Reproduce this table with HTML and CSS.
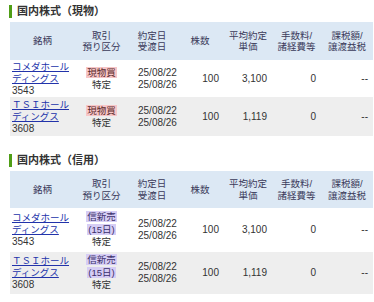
FILE: index.html
```html
<!DOCTYPE html>
<html lang="ja">
<head>
<meta charset="utf-8">
<link rel="stylesheet" href="styles.css">
</head>
<body>
<div class="title first">国内株式（現物）</div>
<table class="tbl">
  <colgroup>
    <col class="c1"><col class="c2"><col class="c3"><col class="c4"><col class="c5"><col class="c6"><col class="c7">
  </colgroup>
  <tr class="head h1">
    <th>銘柄</th><th>取引<br>預り区分</th><th>約定日<br>受渡日</th><th>株数</th><th>平均約定<br>単価</th><th>手数料/<br>諸経費等</th><th>課税額/<br>譲渡益税</th>
  </tr>
  <tr class="row ra">
    <td class="name"><a href="#">コメダホール<br>ディングス</a><br><span class="code">3543</span></td>
    <td class="kind"><span class="buy">現物買</span><br>特定</td>
    <td class="date">25/08/22<br>25/08/26</td>
    <td class="num">100</td><td class="num">3,100</td><td class="num">0</td><td class="num">--</td>
  </tr>
  <tr class="row rb alt">
    <td class="name"><a href="#">ＴＳＩホール<br>ディングス</a><br><span class="code">3608</span></td>
    <td class="kind"><span class="buy">現物買</span><br>特定</td>
    <td class="date">25/08/22<br>25/08/26</td>
    <td class="num">100</td><td class="num">1,119</td><td class="num">0</td><td class="num">--</td>
  </tr>
</table>

<div class="title second">国内株式（信用）</div>
<table class="tbl">
  <colgroup>
    <col class="c1"><col class="c2"><col class="c3"><col class="c4"><col class="c5"><col class="c6"><col class="c7">
  </colgroup>
  <tr class="head h2">
    <th>銘柄</th><th>取引<br>預り区分</th><th>約定日<br>受渡日</th><th>株数</th><th>平均約定<br>単価</th><th>手数料/<br>諸経費等</th><th>課税額/<br>譲渡益税</th>
  </tr>
  <tr class="row rc">
    <td class="name"><a href="#">コメダホール<br>ディングス</a><br><span class="code">3543</span></td>
    <td class="kind tall"><span class="sell">信新売</span><br><span class="sell">(15日)</span><br>特定</td>
    <td class="date">25/08/22<br>25/08/26</td>
    <td class="num">100</td><td class="num">3,100</td><td class="num">0</td><td class="num">--</td>
  </tr>
  <tr class="row rd alt">
    <td class="name"><a href="#">ＴＳＩホール<br>ディングス</a><br><span class="code">3608</span></td>
    <td class="kind tall"><span class="sell">信新売</span><br><span class="sell">(15日)</span><br>特定</td>
    <td class="date">25/08/22<br>25/08/26</td>
    <td class="num">100</td><td class="num">1,119</td><td class="num">0</td><td class="num">--</td>
  </tr>
</table>
</body>
</html>
```
FILE: styles.css
```css
html, body {
  margin: 0;
  padding: 0;
  background: #fff;
}
body {
  font-family: "Liberation Sans", "Noto Sans CJK JP", sans-serif;
  font-size: 10px;
  color: #333;
  width: 374px;
}
.title {
  margin-left: 9px;
  border-left: 3px solid #4f9e16;
  padding-left: 5px;
  height: 13px;
  line-height: 13px;
  font-size: 11px;
  font-weight: bold;
  color: #333;
  margin-bottom: 4px;
}
.title.first { margin-top: 5px; }
.title.second { margin-top: 18px; }
.tbl {
  margin-left: 10px;
  width: 363px;
  border-collapse: collapse;
  table-layout: fixed;
}
.c1 { width: 65px; }
.c2 { width: 53px; }
.c3 { width: 48px; }
.c4 { width: 48px; }
.c5 { width: 48px; }
.c6 { width: 49px; }
.c7 { width: 52px; }
.tbl th, .tbl td {
  padding: 0;
  line-height: 12px;
  vertical-align: middle;
}
.head th {
  background: #dce8f4;
  font-weight: normal;
  font-size: 9.5px;
  color: #3a3a5a;
  text-align: center;
  line-height: 11.5px;
}
.h1 { height: 38px; }
.h2 { height: 37px; }
.ra { height: 37px; }
.rb { height: 39px; }
.rc { height: 44px; }
.rd { height: 42px; }
.alt td { background: #eeeeee; }
.name {
  padding-left: 2px !important;
  text-align: left;
  font-size: 9.5px;
}
.name .code { font-size: 10px; }
.name a {
  color: #2233aa;
  text-decoration: underline;
}
.kind { text-align: center; font-size: 9.5px; }
.kind.tall { line-height: 12.5px !important; }
.date {
  padding-left: 10px !important;
  text-align: left;
}
.num {
  text-align: right;
  padding-right: 5px !important;
}
.buy {
  background: #f7c6c8;
  color: #5a2a2a;
  padding: 0 1px;
}
.sell {
  background: #d6cdf5;
  color: #3a2f6a;
  padding: 0 1px;
}
```
